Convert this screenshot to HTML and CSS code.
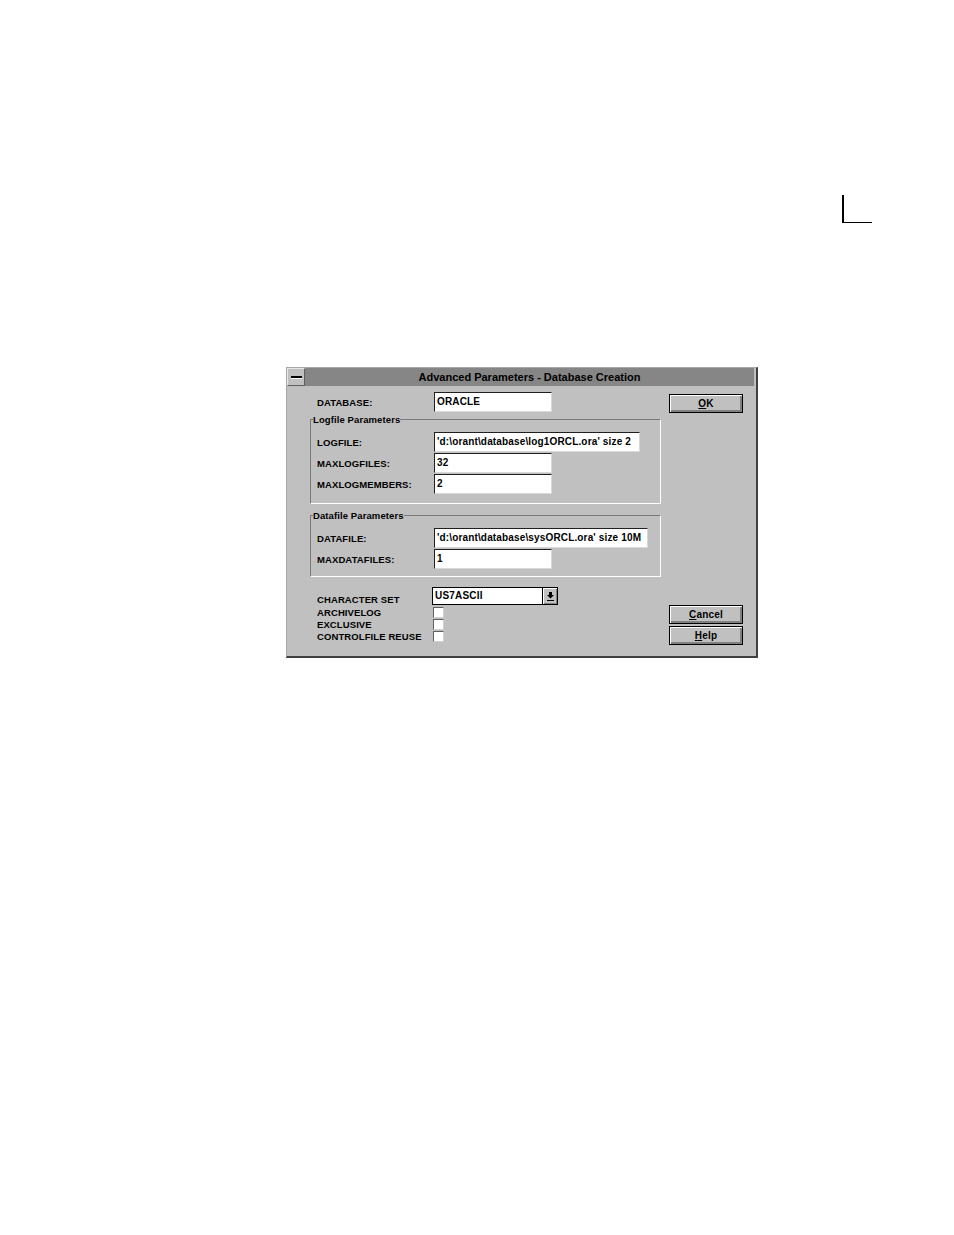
FILE: index.html
```html
<!DOCTYPE html>
<html>
<head>
<meta charset="utf-8">
<title>Advanced Parameters - Database Creation</title>
<link rel="stylesheet" href="styles.css">
</head>
<body>
<div class="page">
  <div class="cropmark"></div>
  <div class="dialog">
    <div class="titlebar">
      <div class="sysmenu"><span class="dash"></span></div>
      <div class="caption">Advanced Parameters - Database Creation</div>
    </div>
    <div class="body">
      <div class="main">
        <div class="row top-row">
          <div class="label">DATABASE:</div>
          <div class="field short">ORACLE</div>
        </div>

        <fieldset class="group logfile">
          <legend>Logfile Parameters</legend>
          <div class="row">
            <div class="label">LOGFILE:</div>
            <div class="field long1">'d:\orant\database\log1ORCL.ora' size 2</div>
          </div>
          <div class="row">
            <div class="label">MAXLOGFILES:</div>
            <div class="field short">32</div>
          </div>
          <div class="row">
            <div class="label">MAXLOGMEMBERS:</div>
            <div class="field short">2</div>
          </div>
        </fieldset>

        <fieldset class="group datafile">
          <legend>Datafile Parameters</legend>
          <div class="row">
            <div class="label">DATAFILE:</div>
            <div class="field long2">'d:\orant\database\sysORCL.ora' size 10M</div>
          </div>
          <div class="row">
            <div class="label">MAXDATAFILES:</div>
            <div class="field short">1</div>
          </div>
        </fieldset>

        <div class="options">
          <div class="label opt-label charset">CHARACTER SET</div>
          <div class="combo">
            <div class="combo-text">US7ASCII</div>
            <div class="combo-btn">
              <svg width="7" height="9" viewBox="0 0 7 9"><path d="M2 0h3v3h2L3.5 6.5 0 3h2z" fill="#000"/><rect x="0" y="8" width="7" height="1" fill="#000"/></svg>
            </div>
          </div>
          <div class="label opt-label">ARCHIVELOG</div>
          <div class="check"></div>
          <div class="label opt-label">EXCLUSIVE</div>
          <div class="check"></div>
          <div class="label opt-label">CONTROLFILE REUSE</div>
          <div class="check"></div>
        </div>
      </div>
      <div class="side">
        <div class="button"><span class="u">O</span>K</div>
        <div class="bottom-buttons">
          <div class="button"><span class="u">C</span>ancel</div>
          <div class="button"><span class="u">H</span>elp</div>
        </div>
      </div>
    </div>
  </div>
</div>
</body>
</html>
```
FILE: styles.css
```css
* { box-sizing: border-box; }
html, body { margin: 0; padding: 0; background: #fff; }
body { font-family: "Liberation Sans", Arial, sans-serif; font-weight: bold; color: #000; }

.page {
  position: relative;
  width: 954px;
  height: 1235px;
  padding-top: 367px;
  padding-left: 286px;
}

.cropmark {
  position: absolute;
  left: 842px;
  top: 195px;
  width: 30px;
  height: 28px;
  border-left: 2px solid #000;
  border-bottom: 1px solid #000;
}

.dialog {
  width: 472px;
  height: 291px;
  background: #c0c0c0;
  border-top: 1px solid #a8a8a8;
  border-left: 1px solid #a8a8a8;
  border-right: 2px solid #404040;
  border-bottom: 2px solid #404040;
  display: flex;
  flex-direction: column;
}

.titlebar {
  height: 18px;
  margin-right: 2px;
  display: flex;
  flex: none;
}
.sysmenu {
  width: 18px;
  height: 18px;
  background: #c0c0c0;
  border: 1px solid #606060;
  border-top-color: #e8e8e8;
  border-left-color: #e8e8e8;
  display: flex;
  align-items: center;
  justify-content: center;
}
.dash {
  display: block;
  width: 11px;
  height: 2px;
  background: #000;
  box-shadow: 0 1px 0 #fff;
}
.caption {
  flex: 1;
  background: #868686;
  font-size: 11px;
  line-height: 19px;
  text-align: center;
}

.body {
  flex: 1;
  display: flex;
}
.main {
  width: 382px;
  display: flex;
  flex-direction: column;
}
.side {
  width: 74px;
  padding-top: 8px;
  padding-bottom: 11px;
  display: flex;
  flex-direction: column;
  justify-content: space-between;
}
.bottom-buttons {
  display: flex;
  flex-direction: column;
  gap: 2px;
}

.label {
  font-size: 9.5px;
  letter-spacing: 0.1px;
  white-space: nowrap;
}
.row {
  display: flex;
  align-items: center;
  height: 20px;
}
.row .label { width: 117px; }
.row + .row { margin-top: 1px; }
.top-row {
  margin-top: 6px;
  margin-left: 30px;
}

.field {
  height: 20px;
  background: #fff;
  border: 1px solid #d8d8d8;
  border-top-color: #202020;
  border-left-color: #202020;
  font-size: 10px;
  letter-spacing: 0.15px;
  line-height: 18px;
  padding-left: 2px;
  white-space: nowrap;
  overflow: hidden;
}
.short { width: 118px; }
.long1 { width: 206px; }
.long2 { width: 214px; }

.group {
  margin: 0 0 0 23px;
  width: 351px;
  padding: 7px 0 9px 6px;
  border: 1px solid #fff;
  border-top-color: #7a7a7a;
  border-left-color: #7a7a7a;
  min-width: 0;
}
.group legend {
  font-size: 9.5px;
  line-height: 11px;
  letter-spacing: 0.1px;
  padding: 0;
  margin-left: -4px;
}
.logfile { margin-top: 2px; }
.datafile { margin-top: 6px; padding-bottom: 7px; }

.options {
  margin-top: 10px;
  margin-left: 30px;
  display: grid;
  grid-template-columns: 115px auto;
  grid-template-rows: 19px 12px 12px 12px;
  align-items: center;
}
.options .combo { grid-row: 1; grid-column: 2; height: 18px; align-self: start; }
.options > .charset { grid-row: 1; grid-column: 1; align-self: end; margin-bottom: 1px; }

.combo {
  width: 126px;
  display: flex;
  border: 1px solid #000;
  background: #fff;
}
.combo-text {
  flex: 1;
  font-size: 10px;
  letter-spacing: 0.2px;
  line-height: 16px;
  padding-left: 2px;
}
.combo-btn {
  width: 15px;
  background: #c0c0c0;
  border-left: 1px solid #000;
  box-shadow: inset 1px 1px 0 #fff, inset -1px -1px 0 #808080;
  display: flex;
  align-items: center;
  justify-content: center;
}

.check {
  width: 11px;
  height: 11px;
  margin-left: 1px;
  background: #fff;
  border: 1px solid #d0d0d0;
  border-top-color: #606060;
  border-left-color: #606060;
}

.button {
  width: 74px;
  height: 19px;
  border: 1px solid #000;
  background: #c0c0c0;
  box-shadow: inset 1px 1px 0 #fff, inset -2px -2px 0 #808080;
  font-size: 10px;
  line-height: 17px;
  text-align: center;
  letter-spacing: 0.2px;
}
.u { text-decoration: underline; }
```
